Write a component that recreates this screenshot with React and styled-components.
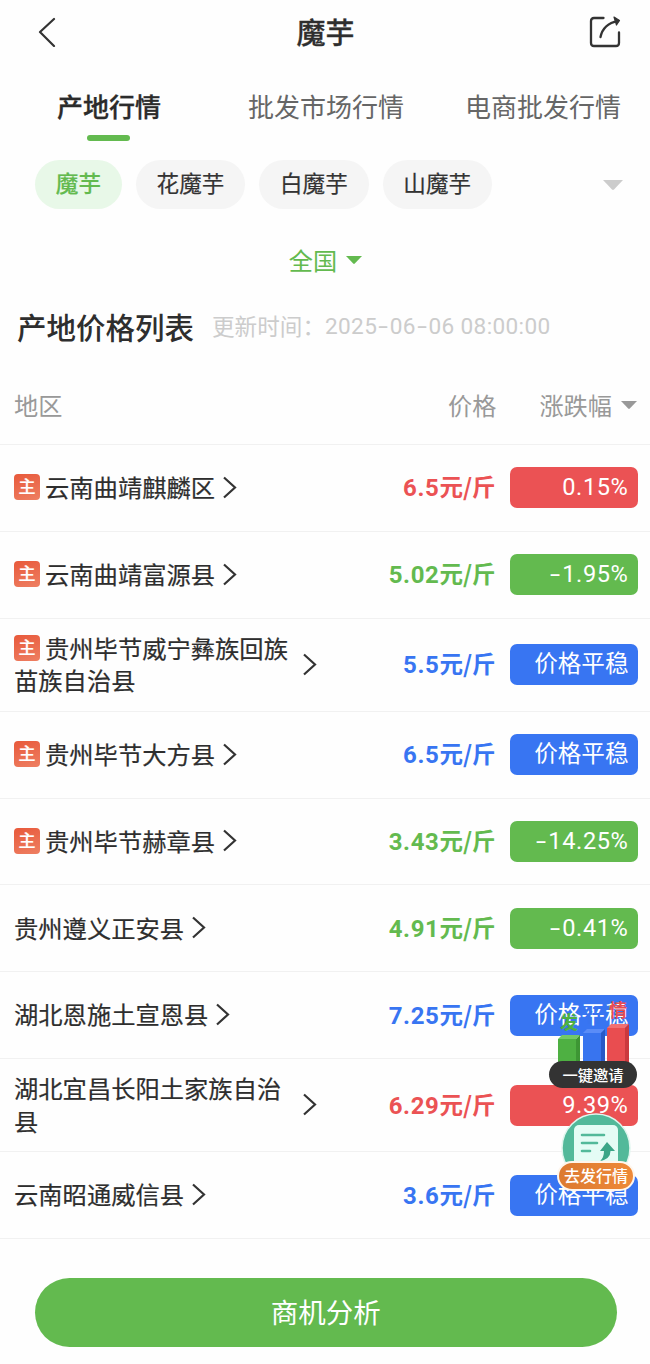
import React from 'react';
import styled, { createGlobalStyle, css } from 'styled-components';

const GREEN = '#63ba4f';
const RED = '#eb5254';
const BLUE = '#3875f2';

const GlobalStyle = createGlobalStyle`
  * { box-sizing: border-box; }
  body { margin: 0; background: #fefefe; }
`;

const Page = styled.main`
  position: relative;
  display: flex;
  flex-direction: column;
  width: 650px;
  height: 1364px;
  overflow: hidden;
  background: #fefefe;
  color: #2e2e2e;
  font-family: 'Noto Sans CJK SC', sans-serif;
  font-size: 24.2px;
  white-space: nowrap;
`;

const Header = styled.header`
  display: flex;
  align-items: center;
  justify-content: space-between;
  height: 64px;
  padding: 0 28px 0 38px;
`;

const Title = styled.h1`
  margin: 0;
  padding: 0 0 3px 7px;
  font-size: 29px;
  line-height: 40px;
  font-weight: 500;
  -webkit-text-stroke: 0.3px currentColor;
`;

const Tabs = styled.nav`
  display: flex;
  height: 80px;
  padding: 23px 29px 0 57px;
`;

const Tab = styled.div`
  display: flex;
  flex-direction: column;
  align-items: center;
  gap: 10px;
  font-size: 26px;
  line-height: 38px;
  color: ${(p) => (p.$active ? '#2b2b2b' : '#666')};
  font-weight: ${(p) => (p.$active ? 500 : 400)};
  &:nth-child(2) { margin-left: 87px; }
  &:last-child { margin-left: auto; }
  ${(p) => p.$active && css`
    -webkit-text-stroke: 0.3px currentColor;
    &::after {
      content: '';
      width: 43px;
      height: 6px;
      margin-right: 1px;
      border-radius: 3px;
      background: ${GREEN};
    }
  `}
`;

const Chips = styled.div`
  display: flex;
  align-items: center;
  gap: 14px;
  height: 49px;
  margin-top: 16px;
  padding: 0 27px 0 35px;
  & > svg { margin-left: auto; }
`;

const Chip = styled.div`
  height: 49px;
  padding: 0 20.8px;
  border-radius: 25px;
  font-size: 22.6px;
  line-height: 46px;
  color: ${(p) => (p.$active ? GREEN : '#333')};
  background: ${(p) => (p.$active ? '#e8f8e8' : '#f5f5f5')};
  font-weight: ${(p) => (p.$active ? 500 : 400)};
  -webkit-text-stroke: 0.2px currentColor;
`;

const RegionPicker = styled.div`
  display: flex;
  align-items: center;
  justify-content: center;
  gap: 9px;
  height: 36px;
  margin-top: 33px;
  padding-left: 1px;
`;

const RegionLabel = styled.span`
  padding-bottom: 1px;
  color: ${GREEN};
`;

const ListHeading = styled.div`
  display: flex;
  align-items: center;
  gap: 18px;
  height: 44px;
  margin-top: 26px;
  padding-left: 17px;
`;

const ListTitle = styled.h2`
  margin: 0;
  font-size: 29.5px;
  line-height: 44px;
  font-weight: 500;
`;

const Updated = styled.div`
  display: flex;
  font-size: 22.6px;
  line-height: 44px;
  color: #ccc;
`;

const Digits = styled.span`
  padding-top: 1px;
  font-family: Roboto, 'Noto Sans CJK SC', sans-serif;
  letter-spacing: ${(p) => p.$spacing};
`;

const Dash = styled.span`
  display: inline-block;
  transform: scaleX(1.55);
  margin: 0 3px;
`;

const Columns = styled.div`
  display: flex;
  align-items: center;
  height: 97px;
  padding: 17px 13px 0 14px;
  border-bottom: 1px solid #f1f1f1;
  color: #999;
`;

const PriceHead = styled.div`
  margin-left: auto;
`;

const ChangeHead = styled.div`
  display: flex;
  align-items: center;
  gap: 9px;
  margin-left: 43px;
`;

const Row = styled.div`
  display: flex;
  align-items: center;
  height: ${(p) => (p.$tall ? 93.2 : 86.8)}px;
  padding: 0 12.5px 0 14px;
  border-bottom: 1px solid #f1f1f1;
`;

const Region = styled.div`
  display: flex;
  align-items: center;
  gap: ${(p) => (p.$tall ? 13 : 8)}px;
`;

const RegionName = styled.div`
  width: ${(p) => (p.$tall ? '276px' : 'auto')};
  padding-bottom: 1px;
  font-size: 24.3px;
  line-height: 32.5px;
  white-space: pre-line;
  -webkit-text-stroke: 0.2px currentColor;
`;

const MainTag = styled.span`
  display: inline-block;
  width: 26px;
  height: 26px;
  margin: 3px 5px 0 0;
  border-radius: 4px;
  background: linear-gradient(160deg, #e8593b, #ee7f62);
  color: #fff;
  font-size: 17px;
  font-weight: 500;
  line-height: 24px;
  text-align: center;
  vertical-align: top;
`;

const Price = styled.div`
  margin-left: auto;
  padding-bottom: 1px;
  color: ${(p) => p.$color};
  font-weight: 700;
  font-size: 23.5px;
  line-height: 34px;
`;

const PriceDigits = styled.span`
  font-family: Roboto, sans-serif;
  font-size: 24px;
  letter-spacing: 0.6px;
`;

const Change = styled.div`
  width: 128px;
  height: 41px;
  margin-left: 14px;
  padding-right: 9px;
  border-radius: 7px;
  background: ${(p) => p.$color};
  color: #fff;
  font-size: 23.6px;
  line-height: 37px;
  text-align: right;
`;

const Footer = styled.footer`
  padding: 39px 33.5px 0 35px;
`;

const AnalyseButton = styled.button`
  display: block;
  width: 100%;
  height: 69.5px;
  padding: 0 0 3px;
  border: 0;
  border-radius: 35px;
  background: ${GREEN};
  color: #fff;
  font: 400 27.5px/66px 'Noto Sans CJK SC', sans-serif;
`;

const Floating = styled.aside`
  position: absolute;
  top: 997px;
  right: 13px;
  display: flex;
  flex-direction: column;
  align-items: center;
  width: 88px;
`;

const InviteLabel = styled.div`
  width: 88px;
  height: 27px;
  margin-top: -4px;
  border-radius: 14px;
  background: #333;
  color: #fff;
  font-size: 15.3px;
  font-weight: 500;
  line-height: 26px;
  text-align: center;
`;

const PublishIcon = styled.svg`
  margin: 24px 0 0 6px;
`;

const PublishLabel = styled.div`
  width: 78px;
  height: 30px;
  margin: -23px 0 0 6px;
  border: 2px solid #fff6ec;
  border-radius: 15px;
  background: linear-gradient(90deg, #dc7a31, #ee8938);
  color: #fff;
  font-size: 16px;
  font-weight: 500;
  line-height: 25px;
  text-align: center;
`;

const Triangle = ({ width, height, color }) => (
  <svg width={width} height={height} viewBox="0 0 20 10" preserveAspectRatio="none">
    <path d="M0 0H20L11 9.5Q10 10.3 9 9.5Z" fill={color} />
  </svg>
);

const Chevron = () => (
  <svg width="14" height="24" viewBox="0 0 14 24" fill="none" stroke="#333" strokeWidth="2.2">
    <path d="M1 1.5L12 11.5L1 21.5" />
  </svg>
);

const BackIcon = () => (
  <svg width="18" height="30" viewBox="0 0 18 30" fill="none" stroke="#333" strokeWidth="2.2" strokeLinecap="round" strokeLinejoin="round">
    <path d="M16 2L2 15L16 29" />
  </svg>
);

const ShareIcon = () => (
  <svg width="34" height="34" viewBox="0 0 34 34" fill="none" stroke="#333" strokeWidth="2.3" strokeLinecap="round" strokeLinejoin="round">
    <path d="M15.5 3H6Q3 3 3 6V28Q3 31 6 31H28Q31 31 31 28V17.5" />
    <path d="M12.5 22Q15 9 30 5.8" />
    <path d="M26 2L31.5 5.5L28.5 10Z" fill="#333" strokeWidth="1.2" />
  </svg>
);

const BarsIcon = () => (
  <svg width="88" height="68" viewBox="0 0 88 68" fontFamily="'Noto Sans CJK SC', sans-serif" fontWeight="700">
    <path d="M9 42L13 38H31L27 42Z" fill="#72c966" />
    <path d="M9 42H27V68H9Z" fill="#4eb042" />
    <path d="M27 42L31 38V68H27Z" fill="#3d9634" />
    <path d="M34 36L38 32H56L52 36Z" fill="#5a8cf7" />
    <path d="M34 36H52V68H34Z" fill="#3874ef" />
    <path d="M52 36L56 32V68H52Z" fill="#2859c7" />
    <path d="M58 31L62 27H80L76 31Z" fill="#f27072" />
    <path d="M58 31H76V68H58Z" fill="#e94d50" />
    <path d="M76 31L80 27V68H76Z" fill="#cb393e" />
    <text x="11" y="32" fontSize="18" fill="#4eb042">发</text>
    <text x="36" y="25" fontSize="18" fill="#3874ef">行</text>
    <text x="60" y="20" fontSize="18" fill="#e94d50">情</text>
  </svg>
);

const Publish = () => (
  <PublishIcon width="70" height="72" viewBox="0 0 70 72">
    <circle cx="35" cy="36" r="34" fill="#52b99a" stroke="#dff6ee" strokeWidth="1.5" />
    <rect x="13" y="13" width="44" height="50" rx="5" fill="#e4fcf5" />
    <path d="M21 23H43M21 31H36M21 39H29" stroke="#52b99a" strokeWidth="2.6" strokeLinecap="round" />
    <path d="M46 30L54 39H49.5Q49.5 47 39 49Q43 46 43 39H39Z" fill="#3ca688" />
  </PublishIcon>
);

const rows = [
  { name: '云南曲靖麒麟区', main: true, price: '6.5', change: '0.15%', color: RED },
  { name: '云南曲靖富源县', main: true, price: '5.02', change: '-1.95%', color: GREEN },
  { name: '贵州毕节威宁彝族回族\n苗族自治县', main: true, tall: true, price: '5.5', color: BLUE },
  { name: '贵州毕节大方县', main: true, price: '6.5', color: BLUE },
  { name: '贵州毕节赫章县', main: true, price: '3.43', change: '-14.25%', color: GREEN },
  { name: '贵州遵义正安县', price: '4.91', change: '-0.41%', color: GREEN },
  { name: '湖北恩施土宣恩县', price: '7.25', color: BLUE },
  { name: '湖北宜昌长阳土家族自治\n县', tall: true, price: '6.29', change: '9.39%', color: RED },
  { name: '云南昭通威信县', price: '3.6', color: BLUE },
];

const Numeric = ({ text, spacing }) => (
  <Digits $spacing={spacing}>
    {text.split(/(-)/).map((part, i) => (part === '-' ? <Dash key={i}>-</Dash> : part))}
  </Digits>
);

export default function App() {
  return (
    <Page>
      <GlobalStyle />
      <Header>
        <BackIcon />
        <Title>魔芋</Title>
        <ShareIcon />
      </Header>
      <Tabs>
        <Tab $active>产地行情</Tab>
        <Tab>批发市场行情</Tab>
        <Tab>电商批发行情</Tab>
      </Tabs>
      <Chips>
        <Chip $active>魔芋</Chip>
        <Chip>花魔芋</Chip>
        <Chip>白魔芋</Chip>
        <Chip>山魔芋</Chip>
        <Triangle width={20} height={10} color="#ccc" />
      </Chips>
      <RegionPicker>
        <RegionLabel>全国</RegionLabel>
        <Triangle width={16} height={8} color={GREEN} />
      </RegionPicker>
      <ListHeading>
        <ListTitle>产地价格列表</ListTitle>
        <Updated>
          更新时间：
          <Numeric text="2025-06-06 08:00:00" spacing="0.35px" />
        </Updated>
      </ListHeading>
      <Columns>
        <div>地区</div>
        <PriceHead>价格</PriceHead>
        <ChangeHead>
          涨跌幅
          <Triangle width={16} height={8} color="#999" />
        </ChangeHead>
      </Columns>
      {rows.map((r) => (
        <Row key={r.name} $tall={r.tall}>
          <Region $tall={r.tall}>
            <RegionName $tall={r.tall}>
              {r.main && <MainTag>主</MainTag>}
              {r.name}
            </RegionName>
            <Chevron />
          </Region>
          <Price $color={r.color}>
            <PriceDigits>{r.price}</PriceDigits>元/斤
          </Price>
          <Change $color={r.color}>
            {r.change ? <Numeric text={r.change} spacing="0.6px" /> : '价格平稳'}
          </Change>
        </Row>
      ))}
      <Footer>
        <AnalyseButton>商机分析</AnalyseButton>
      </Footer>
      <Floating>
        <BarsIcon />
        <InviteLabel>一键邀请</InviteLabel>
        <Publish />
        <PublishLabel>去发行情</PublishLabel>
      </Floating>
    </Page>
  );
}
